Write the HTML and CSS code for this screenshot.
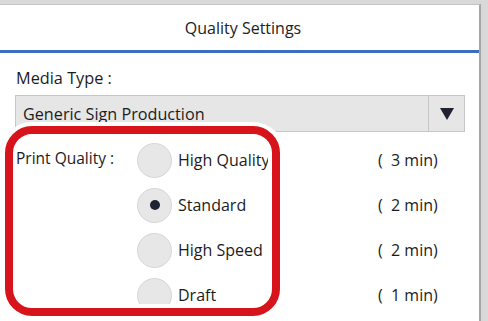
FILE: index.html
```html
<!DOCTYPE html>
<html>
<head>
<meta charset="utf-8">
<link rel="stylesheet" href="styles.css">
</head>
<body>
<div class="window">
  <div class="header">Quality Settings</div>
  <div class="content">
    <div class="field-label">Media Type :</div>
    <div class="dropdown">
      <div class="dropdown-value">Generic Sign Production</div>
      <div class="dropdown-btn"><span class="tri"></span></div>
    </div>
    <div class="options">
      <div class="row">
        <div class="row-label"><span class="pq">Print Quality :</span></div>
        <div class="radio"></div>
        <div class="opt">High Quality</div>
        <div class="time">(&nbsp; 3 min)</div>
      </div>
      <div class="row">
        <div class="row-label"></div>
        <div class="radio checked"><span class="dot"></span></div>
        <div class="opt">Standard</div>
        <div class="time">(&nbsp; 2 min)</div>
      </div>
      <div class="row">
        <div class="row-label"></div>
        <div class="radio"></div>
        <div class="opt">High Speed</div>
        <div class="time">(&nbsp; 2 min)</div>
      </div>
      <div class="row">
        <div class="row-label"></div>
        <div class="radio"></div>
        <div class="opt">Draft</div>
        <div class="time">(&nbsp; 1 min)</div>
      </div>
    </div>
  </div>
  <div class="highlight"></div>
</div>
<div class="side"></div>
</body>
</html>
```

FILE: styles.css
```css
html, body {
  margin: 0;
  padding: 0;
}
body {
  width: 488px;
  height: 321px;
  overflow: hidden;
  display: flex;
  background: #d9d9d9;
  font-family: "Open Sans", "Noto Sans", sans-serif;
  color: #1c1c1c;
}
.window {
  position: relative;
  margin-top: 4px;
  width: 481px;
  height: 317px;
  background: #fff;
  border-right: 2px solid #a6a6a6;
  border-top: 1px solid #c4c4c4;
  box-sizing: border-box;
  display: flex;
  flex-direction: column;
}
.side {
  flex: 1;
}
.header {
  height: 45px;
  flex: 0 0 auto;
  display: flex;
  align-items: center;
  justify-content: center;
  padding-left: 7px;
  font-size: 16px;
  color: #222;
  border-bottom: 3px solid #3d6dbf;
}
.content {
  padding: 0 16px;
}
.field-label {
  margin-top: 14px;
  font-size: 16.3px;
  line-height: 22px;
}
.dropdown {
  margin-top: 6px;
  margin-left: -1px;
  width: 450px;
  height: 37px;
  box-sizing: border-box;
  border: 1px solid #c6c6c6;
  background: #e6e6e6;
  display: flex;
  align-items: center;
}
.dropdown-value {
  flex: 1;
  padding-left: 7px;
  font-size: 16.2px;
}
.dropdown-btn {
  width: 35px;
  height: 100%;
  border-left: 1px solid #c6c6c6;
  display: flex;
  align-items: center;
  justify-content: center;
}
.tri {
  width: 0;
  height: 0;
  border-left: 7px solid transparent;
  border-right: 7px solid transparent;
  border-top: 12px solid #1f2331;
}
.options {
  margin-top: 5.5px;
}
.row {
  height: 45px;
  display: flex;
  align-items: center;
}
.row-label {
  width: 121px;
  font-size: 15.5px;
}
.pq {
  display: block;
  margin-bottom: 4px;
}
.radio {
  width: 35px;
  height: 35px;
  box-sizing: border-box;
  border-radius: 50%;
  background: #e7e7e7;
  border: 1px solid #d6d6d6;
  display: flex;
  align-items: center;
  justify-content: center;
}
.dot {
  width: 10px;
  height: 10px;
  border-radius: 50%;
  background: #1f2331;
}
.opt {
  margin-left: 6px;
  width: 200px;
  font-size: 16px;
  white-space: nowrap;
  overflow: hidden;
}
.time {
  font-size: 16px;
  white-space: nowrap;
}
.highlight {
  position: absolute;
  left: 5px;
  top: 121px;
  width: 275px;
  height: 190px;
  box-sizing: border-box;
  border: 8px solid #d7141b;
  border-radius: 27px;
  box-shadow: 0 0 0 4px #fff, inset 0 0 0 4px #fff;
}
```
